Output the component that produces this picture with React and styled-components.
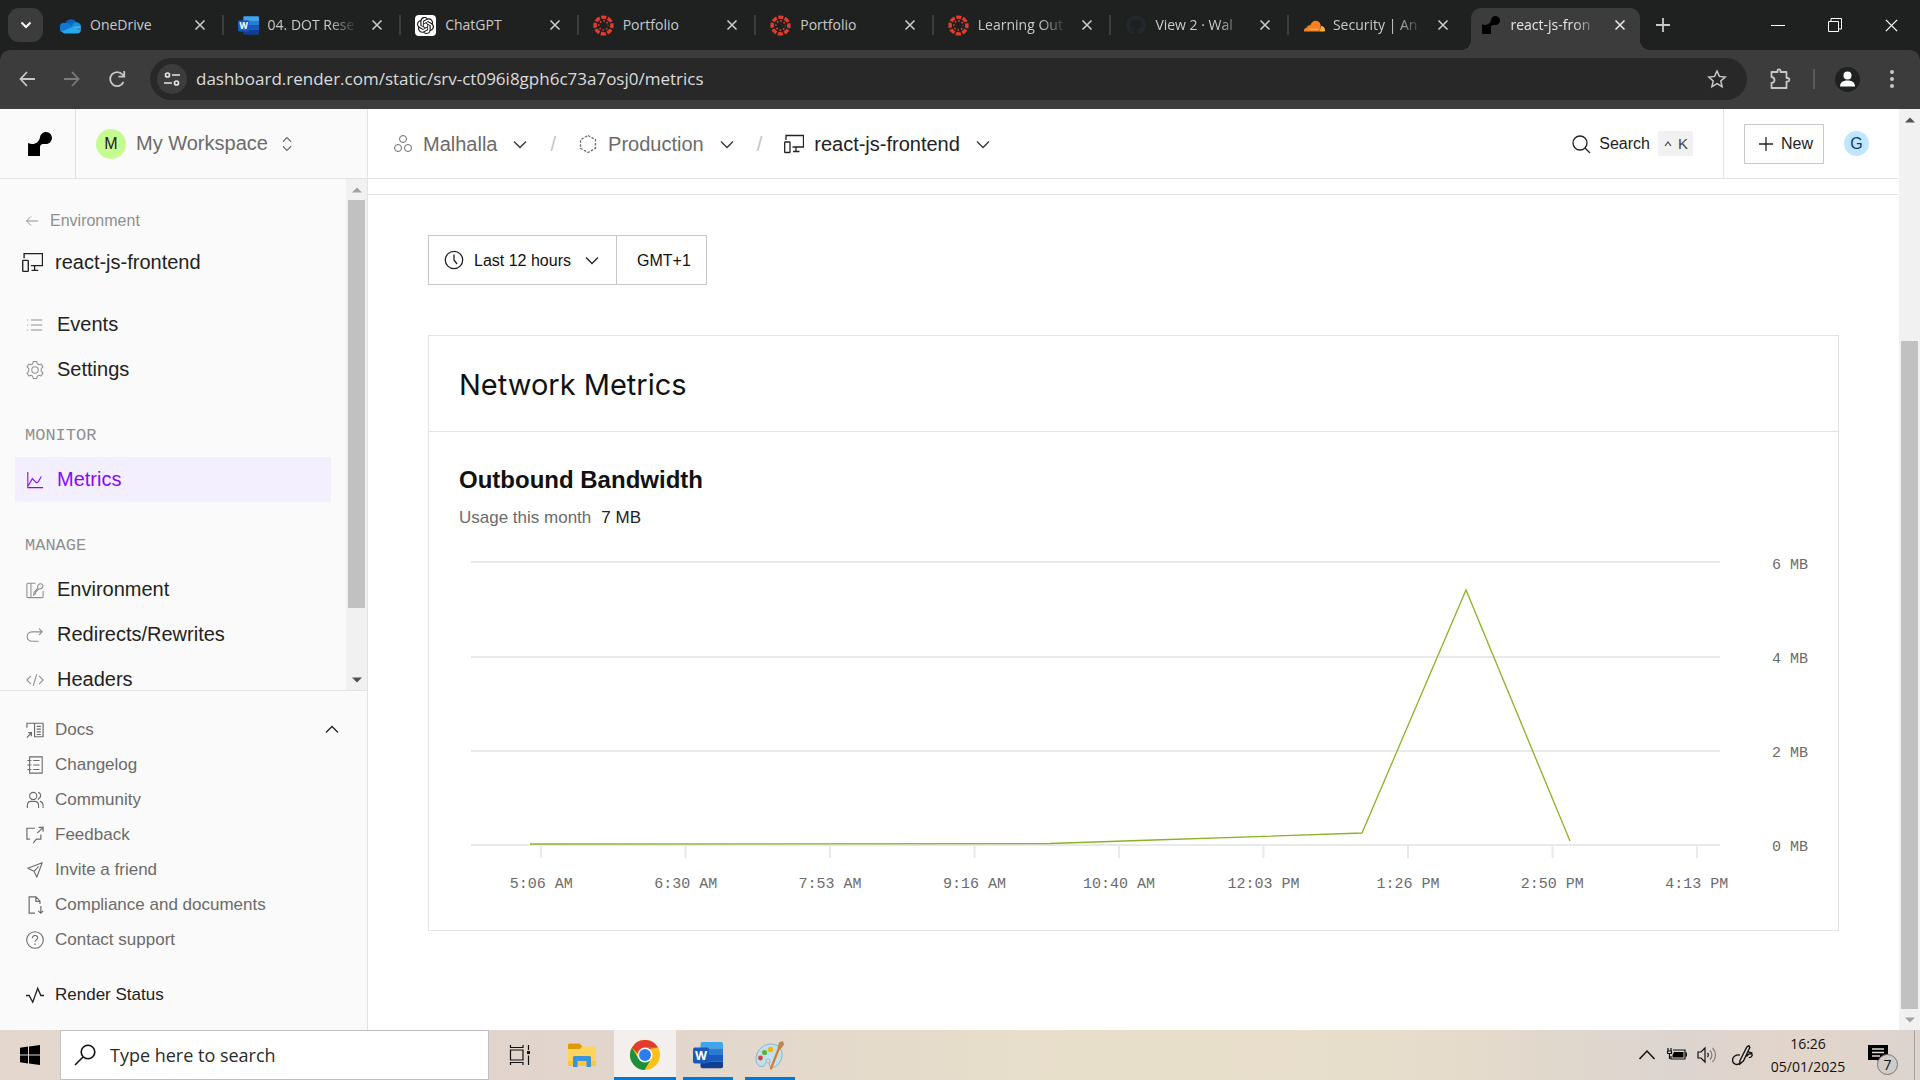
import React from "react";
import styled, { createGlobalStyle, css } from "styled-components";
import { SiOpenai } from "react-icons/si";
import { FaGithub } from "react-icons/fa";

const sans = '"Liberation Sans", Arial, sans-serif';
const mono = '"Liberation Mono", "Courier New", monospace';
const system = '"Open Sans", "Segoe UI", sans-serif';
const display = 'Inter, "Liberation Sans", sans-serif';

const GlobalStyle = createGlobalStyle`
  *, *::before, *::after { box-sizing: border-box; }
  body { margin: 0; font-family: ${sans}; background: #fff; color: #222; }
  h1, h2, p, ul, ol { margin: 0; padding: 0; }
  ul, ol { list-style: none; }
  a { color: inherit; text-decoration: none; }
  button { font: inherit; color: inherit; background: none; border: 0; padding: 0; cursor: pointer; }
  svg { display: block; flex: none; }
`;

/* ---------- icons ---------- */

function Icon({ size = 20, box = 20, weight = 1, children, ...rest }) {
  return (
    <svg
      width={size}
      height={size}
      viewBox={`0 0 ${box} ${box}`}
      fill="none"
      stroke="currentColor"
      strokeWidth={weight}
      aria-hidden="true"
      {...rest}
    >
      {children}
    </svg>
  );
}

const RenderMark = ({ size }) => (
  <Icon size={size} box={24} fill="#000" stroke="none">
    <path fill="#000" d="M18.263.007c-3.121-.147-5.744 2.109-6.192 5.082-.018.138-.045.272-.067.405-.696 3.703-3.936 6.507-7.827 6.507-1.388 0-2.691-.356-3.825-.979a.2024.2024 0 0 0-.302.178V24H12v-8.999c0-1.656 1.338-3 2.987-3h2.988c3.382 0 6.103-2.817 5.97-6.244-.12-3.084-2.61-5.603-5.682-5.75" />
  </Icon>
);

const OneDriveMark = () => (
  <Icon size={21} stroke="none">
    <path fill="#0364b8" d="M5 8.200A5.800 5.800 0 0 1 15.600 7L12 11.500z" />
    <path fill="#0f78d4" d="M4.600 7.500a4.600 4.600 0 0 1 3.600.7l5.300 3.300L2.200 16.500A4.700 4.700 0 0 1 4.600 7.500z" />
    <path fill="#1490df" d="M11.500 9.800a5 5 0 0 1 4.500-2.800 4.500 4.500 0 0 1 4 5l-8 1.500z" />
    <path fill="#28a8ea" d="M1.600 15.500 12.400 11.200l7.400 4A3.400 3.400 0 0 1 16.400 17.500H4.500a4 4 0 0 1-2.900-2z" />
    <path fill="#50d0ff" d="M12.300 11.300 19 10.500a4 4 0 0 1 .6 5z" opacity=".6" />
  </Icon>
);

const WordMark = ({ size }) => (
  <Icon size={size} box={32} stroke="none">
    <path fill="#41a5ee" d="M10 2h20a2 2 0 0 1 2 2v5H8V4a2 2 0 0 1 2-2z" />
    <path fill="#2b7cd3" d="M8 9h24v7H8z" />
    <path fill="#185abd" d="M8 16h24v7H8z" />
    <path fill="#103f91" d="M8 23h24v5a2 2 0 0 1-2 2H10a2 2 0 0 1-2-2z" />
    <rect x="0" y="8" width="17" height="17" rx="2" fill="#185abd" />
    <text x="8.500" y="21.500" textAnchor="middle" fontFamily={display} fontSize="13" fontWeight="700" fill="#fff">W</text>
  </Icon>
);

const CanvasMark = () => (
  <Icon size={21} box={22} stroke="#e63b2c">
    <circle cx="11" cy="11" r="8.800" strokeWidth="3.600" strokeDasharray="5.250 1.661" strokeDashoffset="2.600" />
    <circle cx="11" cy="11" r="4.800" strokeWidth="1.700" strokeDasharray="1.600 2.170" strokeDashoffset="0.800" />
  </Icon>
);

const CloudflareMark = () => (
  <Icon size={22} box={24} stroke="none">
    <path fill="#f6821f" d="M1 18c-.2-3 1.600-4.300 3.600-4.500.1-2 1.900-2.800 3.200-2 1.200-4 4-5.500 6.400-5.300 3 .2 5 2.600 5.200 5.500L18 18z" />
    <path fill="#fbad41" d="M18 18.100l1.800-6c2.500 0 4.200 2 4.200 4.200 0 .7-.1 1.200-.3 1.800z" />
    <path stroke="#fff" strokeWidth=".8" d="M7 15.600h9.500" opacity=".5" />
  </Icon>
);

const ChromeMark = () => (
  <Icon size={30} box={30} stroke="none">
    <circle cx="15" cy="15" r="15" fill="#fbc116" />
    <path fill="#e33b2e" d="M15 15 2 7.500A15 15 0 0 1 28 7.500H15z" />
    <path fill="#1e8e3e" d="M2 7.500 8.500 18.700 15 22.500 13.500 29.930A15 15 0 0 1 2 7.500z" />
    <path fill="#1e8e3e" d="M8 18 15 21.500 20.500 20 14.500 30 8 28z" />
    <path fill="#e33b2e" d="M2 7.500h26L18 9 8 14z" />
    <circle cx="15" cy="15" r="7.500" fill="#fff" />
    <circle cx="15" cy="15" r="6" fill="#2b7de9" />
  </Icon>
);

const FolderMark = () => (
  <Icon size={28} box={28} stroke="none">
    <path fill="#dd9a06" d="M0 4a1.500 1.500 0 0 1 1.500-1.500h10L14 5v4H0z" />
    <path fill="#ffd45c" d="M0 8h12l2-2.500h13a1 1 0 0 1 1 1V25H0z" />
    <path fill="#fbc73f" d="M0 20h28v5H0z" />
    <path fill="#3a94da" d="M5 26V16.500A1.500 1.500 0 0 1 6.500 15h15a1.500 1.500 0 0 1 1.500 1.500V26h-4.500v-6h-9v6z" />
  </Icon>
);

const PaintMark = () => (
  <Icon size={30} box={30} stroke="none">
    <path fill="#bfe0ee" stroke="#79a8bf" strokeWidth=".8" d="M16 4C8 4 1 11 1 19c0 4 2 7.500 6 7.500 3 0 2.500-3 4.500-4 2.500-1 3 1 3 3s2 3 5 1.500c5-2.500 8-8 7.500-13.500C26.500 7.500 22 4 16 4z" />
    <circle cx="13" cy="21" r="2" fill="#e4dccb" stroke="#79a8bf" strokeWidth=".6" />
    <circle cx="5.500" cy="18" r="2.400" fill="#d8433b" />
    <circle cx="9.500" cy="12.500" r="2.600" fill="#5db331" />
    <circle cx="15.500" cy="9.500" r="2.700" fill="#f0b619" />
    <path stroke="#dd7a24" strokeWidth="2.200" strokeLinecap="round" d="M16 28.500 24 8" />
    <path fill="#bb8650" d="m22.500 8 1.500-5.500L28 1l1 3.500-3.500 5z" />
  </Icon>
);

const StaticSite = ({ size }) => (
  <Icon size={size} box={20} weight={1.3}>
    <path d="M2 6V1.500h17.500v11.500H8.500M12 13v4.500M9 17.500h6.500" />
    <rect x=".7" y="8" width="5.300" height="10.500" rx=".6" />
  </Icon>
);

const Chevron = ({ dir = "down", size = 16 }) => (
  <Icon size={size} box={16} weight={1.3}>
    <path d={dir === "down" ? "m2 5.500 6 6 6-6" : "m2 10.500 6-6 6 6"} />
  </Icon>
);

const Close = ({ size = 12, weight = 1.6 }) => (
  <Icon size={size} box={12} weight={weight}><path d="m1.500 1.500 9 9M10.500 1.500l-9 9" /></Icon>
);

const glyphs = {
  events: <path strokeWidth="1.200" d="M1.500 4.500h1M1.500 10h1M1.500 15.500h1M5.500 4.500h12.500M5.500 10h12.500M5.500 15.500h12.500" />,
  settings: (
    <g transform="translate(-1.200 -1.200) scale(1.120)">
      <path d="M8.300 1.500h3.400l.6 2.300 1.500.9 2.300-.7 1.800 2.900-1.700 1.700v2.800l1.700 1.700-1.800 2.900-2.300-.7-1.500.9-.6 2.300H8.300l-.6-2.300-1.500-.9-2.300.7-1.800-2.900 1.700-1.700V8.600L2.100 6.900 3.900 4l2.300.7 1.500-.9z" strokeLinejoin="round" />
      <circle cx="10" cy="10" r="3.200" />
    </g>
  ),
  metrics: <path strokeWidth="1.200" d="M2 1v17.500h17M2.500 16.500l4.500-8 4.500 4.500c1.500.5 2-.5 2.500-1.500l3-5.500" />,
  environment: (
    <path strokeWidth="1.200" d="M10.500 2.500H2a1 1 0 0 0-1 1v14a1 1 0 0 0 1 1h16a1 1 0 0 0 1-1V11M5.500 2.500v16M8.500 15.500l.5-3 4-4.500c-.5-3 1-5 3.500-5s3 3 1.500 4.500-2.500 1.500-3.500 1.200L11 12l-.5 2zM16 5.500h.5" />
  ),
  redirects: <path strokeWidth="1.200" d="M18 6.500H6.500a4.800 4.800 0 0 0 0 10.500H14M14.500 3l3.500 3.500-3.500 3.500" />,
  headers: <path strokeWidth="1.200" d="M5.500 5.500 1 10l4.500 4.500M14.500 5.500 19 10l-4.500 4.500M12 3.500 8 16.500" />,
  docs: (
    <>
      <path strokeWidth="1.300" d="M1 7.500V2.500h18v15H9.500V2.500M12 6h4.500M12 9h4.500M12 12h4.500M12 15h4.500" />
      <path strokeWidth="1.400" d="M1 18.500 6 13M2.500 13H6v4" />
    </>
  ),
  changelog: <path strokeWidth="1.200" d="M4 1h14v18H4zM1.500 5h4.500M1.500 10h4.500M1.500 15h4.500M8 5h7M8 10h7M8 15h7" />,
  community: (
    <>
      <circle cx="8" cy="5.500" r="4" strokeWidth="1.200" />
      <path strokeWidth="1.200" d="M1.500 19v-3c0-3 2-4.500 4-4.500h4c2.500 0 4.500 1.500 4.500 4.500v3M13.500 1.500c3 .5 4.500 5-.3 8M15.500 11.500c2.500.5 3.500 2 3.500 4.500v3" />
    </>
  ),
  feedback: <path strokeWidth="1.300" d="M10 2.500H1v12h3.500M16.500 9.500v5h-5L8 19M12.500 8 19 1.500M14 1.500h5v5" />,
  invite: <path strokeWidth="1.200" strokeLinejoin="round" d="M18 2 2 8l7 3.500L12 18zM9 11.500 14 6" />,
  compliance: <path strokeWidth="1.300" d="M10 19H3.500V1H11l4.500 4.500V9M11 1v5h4.500M16.500 11v8M13.500 16.500l3 2.500 2.500-2.500" />,
  support: (
    <>
      <circle cx="10" cy="10" r="9.200" strokeWidth="1.200" />
      <path strokeWidth="1.200" d="M7 8c0-4 6-4 6-.5 0 2.300-3 2.300-3 4.500M10 14v1.500" />
    </>
  ),
  status: <path strokeWidth="1.500" d="M0 10.500h3.500l4 7.500L13 2.500l3.500 8H20" />,
};

/* ---------- browser frame ---------- */

const Screen = styled.div`
  display: flex;
  flex-direction: column;
  height: 100vh;
  overflow: hidden;
`;

const TabStrip = styled.div`
  display: flex;
  align-items: center;
  height: 50px;
  flex: none;
  background: #1f2120;
  color: #c9cac9;
  font: 14px/20px ${system};
`;

const TabSearch = styled.button`
  display: grid;
  place-items: center;
  width: 35px;
  height: 34px;
  margin: 0 3px 0 8px;
  border-radius: 11px;
  background: #3c3c3c;
  color: #fff;
`;

const Tabs = styled.ul`
  display: flex;
  flex: 1;
  max-width: 1598px;
  height: 50px;
  padding-top: 8px;
`;

const TabItem = styled.li`
  position: relative;
  display: flex;
  align-items: center;
  flex: 1;
  min-width: 0;
  height: 42px;
  padding: 0 16px 8px 14px;
  ${(p) =>
    p.$active
      ? css`
          color: #e6e6e6;
          margin: 0 4px;
          padding: 0 12px 8px 10px;
          border-radius: 10px 10px 0 0;
          background: #3c3c3c;
          &::before,
          &::after {
            content: "";
            position: absolute;
            bottom: 0;
            width: 10px;
            height: 10px;
          }
          &::before {
            left: -10px;
            background: radial-gradient(circle at 0 0, transparent 10px, #3c3c3c 10px);
          }
          &::after {
            right: -10px;
            background: radial-gradient(circle at 100% 0, transparent 10px, #3c3c3c 10px);
          }
        `
      : p.$divider &&
        css`
          &::after {
            content: "";
            position: absolute;
            right: 0;
            top: 7px;
            width: 2px;
            height: 20px;
            background: #3c3c3c;
          }
        `}
`;

const TabTitle = styled.button`
  display: flex;
  align-items: center;
  gap: 9px;
  flex: 1;
  min-width: 0;
`;

const TabIcon = styled.span`
  display: grid;
  place-items: center;
  flex: none;
  width: 21px;
  height: 21px;
  border-radius: 4px;
  background: ${(p) => (p.$light ? "#fff" : "transparent")};
  color: ${(p) => (p.$light ? "#111" : "#24292f")};
`;

const TabText = styled.span`
  flex: 1;
  min-width: 0;
  text-align: left;
  white-space: nowrap;
  mask-image: ${(p) => (p.$fade ? "linear-gradient(90deg, #000 70%, transparent)" : "none")};
`;

const TabClose = styled.button`
  display: grid;
  place-items: center;
  width: 16px;
  height: 20px;
  margin-left: 12px;
`;

const NewTab = styled.button`
  display: grid;
  place-items: center;
  width: 34px;
  height: 34px;
  margin-left: 2px;
`;

const WindowControls = styled.div`
  display: flex;
  margin-left: auto;
  color: #fff;
`;

const WindowControl = styled.button`
  display: grid;
  place-items: center;
  width: 57px;
  height: 50px;
`;

const ToolbarBack = styled.div`
  flex: none;
  background: #1f2120;
`;

const Toolbar = styled.div`
  display: flex;
  align-items: center;
  height: 59px;
  padding: 0 11px 1px 10px;
  border-radius: 10px 10px 0 0;
  background: #3c3c3c;
  color: #c7c7c7;
`;

const ToolButton = styled.button`
  display: grid;
  place-items: center;
  width: 34px;
  height: 34px;
  margin-right: 11px;
  color: ${(p) => (p.$dim ? "#7c7c7c" : "inherit")};
  &:last-child { margin-right: 0; }
`;

const AddressBar = styled.form`
  display: flex;
  align-items: center;
  flex: 1;
  height: 42px;
  margin: 0 16px 0 5px;
  padding: 0 20px 0 7px;
  border-radius: 21px;
  background: #282828;
`;

const SiteInfo = styled.button`
  display: grid;
  place-items: center;
  width: 30px;
  height: 30px;
  margin-right: 9px;
  border-radius: 50%;
  background: #3c3c3c;
  color: #e3e3e3;
`;

const AddressInput = styled.input`
  flex: 1;
  min-width: 0;
  padding: 0;
  border: 0;
  outline: 0;
  background: transparent;
  color: #dcdcdc;
  font: 17px/24px ${system};
`;

const ToolDivider = styled.span`
  width: 2px;
  height: 20px;
  margin: 0 15px 0 5px;
  background: #5a5a5a;
`;

const ProfileDot = styled.span`
  display: grid;
  place-items: center;
  width: 25px;
  height: 25px;
  border-radius: 50%;
  background: #1f2120;
  color: #fff;
`;

/* ---------- dashboard ---------- */

const Viewport = styled.div`
  display: flex;
  flex: 1;
  min-height: 0;
  background: #fff;
`;

const Dashboard = styled.div`
  display: flex;
  flex-direction: column;
  flex: 1;
  min-width: 0;
`;

const TopBar = styled.header`
  display: flex;
  height: 70px;
  flex: none;
  border-bottom: 1px solid #e3e3e3;
`;

const Brand = styled.a`
  display: grid;
  place-items: center;
  width: 76px;
  padding-left: 4px;
  border-right: 1px solid #e3e3e3;
  background: #fafafa;
`;

const Workspace = styled.button`
  display: flex;
  align-items: center;
  gap: 10px;
  width: 292px;
  padding-left: 20px;
  border-right: 1px solid #e3e3e3;
  background: #fafafa;
  color: #6b6b6b;
  font-size: 20px;
`;

const Initial = styled.span`
  display: grid;
  place-items: center;
  width: ${(p) => p.$size}px;
  height: ${(p) => p.$size}px;
  border-radius: 50%;
  background: ${(p) => p.$bg};
  color: ${(p) => p.$fg};
  font-size: 16px;
`;

const Crumbs = styled.nav`
  display: flex;
  align-items: center;
  flex: 1;
  padding: 1px 0 0 25px;
  font-size: 20px;
  color: #6b6b6b;
`;

const Crumb = styled.a`
  display: flex;
  align-items: center;
  gap: 10px;
  color: ${(p) => (p.$current ? "#222" : "inherit")};
`;

const CrumbMenu = styled.button`
  margin-left: 15px;
  color: #333;
`;

const Slash = styled.span`
  margin: 0 22px;
  color: #c4c4c4;
`;

const SearchButton = styled.button`
  display: flex;
  align-items: center;
  gap: 8px;
  padding-right: 30px;
  font-size: 16px;
`;

const Keys = styled.kbd`
  display: flex;
  align-items: center;
  gap: 6px;
  height: 25px;
  padding: 0 5px 0 6px;
  background: #f1f1f1;
  color: #444;
  font: 15px ${sans};
`;

const Account = styled.div`
  display: flex;
  align-items: center;
  gap: 20px;
  padding: 0 30px 0 20px;
  border-left: 1px solid #e3e3e3;
`;

const NewButton = styled.button`
  display: flex;
  align-items: center;
  gap: 7px;
  height: 40px;
  padding: 0 10px 0 13px;
  border: 1px solid #c7c7c7;
  font-size: 16px;
`;

const Columns = styled.div`
  display: flex;
  flex: 1;
  min-height: 0;
`;

const Sidebar = styled.aside`
  display: flex;
  flex-direction: column;
  width: 368px;
  flex: none;
  border-right: 1px solid #e3e3e3;
  background: #fafafa;
`;

const SidebarScroll = styled.div`
  display: flex;
  flex: 1;
  min-height: 0;
`;

const SidebarNav = styled.nav`
  flex: 1;
  overflow: hidden;
  padding: 29px 15px 0 15px;
`;

const BackLink = styled.a`
  display: flex;
  align-items: center;
  gap: 11px;
  height: 26px;
  padding-left: 10px;
  color: #8f8f8f;
  font-size: 16px;
`;

const ServiceName = styled.a`
  display: flex;
  align-items: center;
  gap: 12px;
  height: 30px;
  margin: 13px 0 25px;
  padding-left: 7px;
  font-size: 20px;
`;

const NavLabel = styled.h2`
  display: flex;
  align-items: center;
  height: 65px;
  padding: 22px 10px 0;
  color: #8f8f8f;
  font: 17px/20px ${mono};
`;

const NavLink = styled.a`
  display: flex;
  align-items: center;
  gap: 13px;
  height: 45px;
  padding-left: 11px;
  font-size: 20px;
  background: ${(p) => (p.$active ? "#f4efff" : "transparent")};
  color: ${(p) => (p.$active ? "#8a05ff" : "#222")};
  svg { color: ${(p) => (p.$active ? "#8a05ff" : "#8f8f8f")}; }
`;

const SidebarFooter = styled.div`
  padding: 21px 27px 18px 26px;
  border-top: 1px solid #e3e3e3;
`;

const FooterRow = styled.div`
  display: flex;
  align-items: center;
  justify-content: space-between;
  height: 35px;
  margin-top: ${(p) => (p.$spaced ? "20px" : "0")};
  color: ${(p) => (p.$spaced ? "#222" : "#6b6b6b")};
`;

const FooterLink = styled.a`
  display: flex;
  align-items: center;
  gap: 11px;
  font-size: 17px;
`;

const FooterToggle = styled.button`
  color: #222;
`;

const Track = styled.div`
  display: flex;
  flex-direction: column;
  align-items: center;
  width: 21px;
  flex: none;
  background: #f1f1f1;
`;

const Arrow = styled.span`
  display: grid;
  place-items: center;
  flex: none;
  height: 21px;
  color: ${(p) => (p.$on ? "#505050" : "#a3a3a3")};
`;

const Lane = styled.div`
  display: flex;
  flex-direction: column;
  flex: 1;
  width: 17px;
`;

const Thumb = styled.span`
  flex: ${(p) => p.$share};
  background: #c1c1c1;
`;

const Gap = styled.span`
  flex: ${(p) => p.$share};
`;

const Main = styled.main`
  flex: 1;
  min-width: 0;
  padding-top: 15px;
`;

const Content = styled.div`
  border-top: 1px solid #e3e3e3;
  padding: 40px 60px 0;
`;

const Filters = styled.div`
  display: inline-flex;
  height: 50px;
  margin-bottom: 50px;
  border: 1px solid #c7c7c7;
  font-size: 16px;
`;

const RangeField = styled.label`
  display: flex;
  align-items: center;
  padding: 0 16px 0 15px;
`;

const RangeSelect = styled.select`
  appearance: none;
  margin: 0 13px 0 10px;
  padding: 2px 0 0;
  border: 0;
  background: transparent;
  color: #111;
  font: 16px/24px ${sans};
`;

const ZoneButton = styled.button`
  padding: 2px 15px 0 20px;
  border-left: 1px solid #c7c7c7;
  color: #111;
`;

const Card = styled.section`
  border: 1px solid #e3e3e3;
`;

const CardHead = styled.header`
  display: flex;
  align-items: center;
  height: 96px;
  padding: 2px 30px 0;
  border-bottom: 1px solid #e3e3e3;
`;

const CardTitle = styled.h1`
  font: 400 29px/36px ${display};
  color: #111;
`;

const CardBody = styled.div`
  padding: 33px 28px 35px 30px;
`;

const MetricTitle = styled.h2`
  font: 700 24px/30px ${sans};
  color: #111;
`;

const Usage = styled.p`
  display: flex;
  gap: 10px;
  margin: 11px 0 24px;
  font-size: 17px;
  line-height: 24px;
  color: #6b6b6b;
  strong { font-weight: 400; color: #222; }
`;

const Chart = styled.figure`
  display: grid;
  grid-template-columns: 1fr 41px;
  margin: 0 0 0 10px;
  color: #6b6b6b;
  font: 15px/20px ${mono};
`;

const Plot = styled.svg`
  width: 100%;
  height: 306px;
`;

const YAxis = styled.ol`
  display: flex;
  flex-direction: column;
  justify-content: space-between;
  height: 304px;
  padding: 2px 0 0 3px;
  white-space: nowrap;
`;

const XAxis = styled.ol`
  display: grid;
  grid-template-columns: repeat(9, 1fr);
  margin-top: 15px;
  text-align: center;
`;

/* ---------- desktop bar ---------- */

const Taskbar = styled.footer`
  display: flex;
  align-items: stretch;
  height: 50px;
  flex: none;
  background: linear-gradient(90deg, #e3d7ce 0, #e0d4cc 28%, #e8dfca 58%, #e6dccb 75%, #dcd4cf 87%, #e2d5ca 94%, #dcd4cf 100%);
  color: #111;
  font-family: ${system};
`;

const StartButton = styled.button`
  display: grid;
  place-items: center;
  width: 60px;
`;

const TaskSearch = styled.label`
  display: flex;
  align-items: center;
  gap: 14px;
  width: 429px;
  padding-left: 13px;
  border: 1px solid #c0c0c0;
  background: #fff;
`;

const TaskInput = styled.input`
  flex: 1;
  min-width: 0;
  padding: 0;
  border: 0;
  outline: 0;
  font: 18px/24px ${system};
  &::placeholder { color: #2b2b2b; opacity: 1; }
`;

const TaskButton = styled.button`
  position: relative;
  display: grid;
  place-items: center;
  width: 62px;
  margin: ${(p) => (p.$front ? "0 1px" : "0")};
  background: ${(p) => (p.$front ? "#f3efec" : "transparent")};
  &::after {
    content: "";
    position: absolute;
    bottom: 0;
    left: ${(p) => (p.$front ? 0 : 6)}px;
    right: ${(p) => (p.$front ? 0 : 6)}px;
    height: 3px;
    background: ${(p) => (p.$open ? "#0078d7" : "transparent")};
  }
`;

const Tray = styled.div`
  display: flex;
  align-items: center;
  margin-left: auto;
`;

const TrayButton = styled.button`
  display: grid;
  place-items: center;
  width: ${(p) => p.$w || 30}px;
  height: 50px;
`;

const Clock = styled.time`
  width: 90px;
  margin-right: 5px;
  text-align: center;
  font-size: 14px;
  line-height: 23px;
`;

const Notices = styled.button`
  position: relative;
  display: grid;
  place-items: center;
  width: 40px;
  height: 50px;
`;

const Badge = styled.span`
  position: absolute;
  left: 19px;
  top: 24px;
  width: 21px;
  height: 21px;
  border: 1px solid #777;
  border-radius: 50%;
  background: #cfcbc8;
  font-size: 14px;
  line-height: 19px;
`;

const ShowDesktop = styled.button`
  width: 6px;
  margin-left: 16px;
  border-left: 1px solid #aaa39d;
`;

/* ---------- data ---------- */

const tabs = [
  { title: "OneDrive", icon: <OneDriveMark /> },
  { title: "04. DOT Rese", icon: <WordMark size={21} />, fade: true },
  { title: "ChatGPT", icon: <SiOpenai size={17} />, light: true },
  { title: "Portfolio", icon: <CanvasMark /> },
  { title: "Portfolio", icon: <CanvasMark /> },
  { title: "Learning Out", icon: <CanvasMark />, fade: true },
  { title: "View 2 · Wal", icon: <FaGithub size={20} />, fade: true },
  { title: "Security | An", icon: <CloudflareMark />, fade: true },
  { title: "react-js-fron", icon: <RenderMark size={18} />, fade: true, active: true },
];

const manageLinks = [
  ["environment", "Environment"],
  ["redirects", "Redirects/Rewrites"],
  ["headers", "Headers"],
];

const footerLinks = [
  ["docs", "Docs"],
  ["changelog", "Changelog"],
  ["community", "Community"],
  ["feedback", "Feedback"],
  ["invite", "Invite a friend"],
  ["compliance", "Compliance and documents"],
  ["support", "Contact support"],
];

const times = ["5:06 AM", "6:30 AM", "7:53 AM", "9:16 AM", "10:40 AM", "12:03 PM", "1:26 PM", "2:50 PM", "4:13 PM"];
const levels = ["6 MB", "4 MB", "2 MB", "0 MB"];
const gridRows = [8, 103, 197, 291];
const samples = "61,290 581,289.500 685,286 893,279 997,36 1101,287";

const NavItem = ({ glyph, active, children }) => (
  <NavLink href="#" $active={active}>
    <Icon size={18}>{glyphs[glyph]}</Icon>
    {children}
  </NavLink>
);

const Triangle = ({ up }) => (
  <svg width="10" height="6" viewBox="0 0 10 6" aria-hidden="true">
    <path fill="currentColor" d={up ? "M0 5.500 5 .5l5 5z" : "M0 .5h10l-5 5z"} />
  </svg>
);

function Scrollbar({ before, thumb, after, canUp, canDown }) {
  return (
    <Track>
      <Arrow $on={canUp}><Triangle up /></Arrow>
      <Lane>
        <Gap $share={before} />
        <Thumb $share={thumb} />
        <Gap $share={after} />
      </Lane>
      <Arrow $on={canDown}><Triangle /></Arrow>
    </Track>
  );
}

/* ---------- sections ---------- */

const BrowserFrame = () => (
  <>
    <TabStrip>
      <TabSearch aria-label="Search tabs">
        <Icon size={14} box={14} weight={2}><path d="m2.500 4.500 4.500 4.500 4.500-4.500" /></Icon>
      </TabSearch>
      <Tabs>
        {tabs.map((tab, i) => (
          <TabItem key={i} $active={tab.active} $divider={i < 7}>
            <TabTitle>
              <TabIcon $light={tab.light}>{tab.icon}</TabIcon>
              <TabText $fade={tab.fade}>{tab.title}</TabText>
            </TabTitle>
            <TabClose aria-label="Close tab"><Close /></TabClose>
          </TabItem>
        ))}
      </Tabs>
      <NewTab aria-label="New tab">
        <Icon size={14} box={14} weight={1.8}><path d="M7 0v14M0 7h14" /></Icon>
      </NewTab>
      <WindowControls>
        <WindowControl aria-label="Minimise"><Icon size={14} box={14}><path d="M0 7.500h14" /></Icon></WindowControl>
        <WindowControl aria-label="Restore"><Icon size={14} box={14}><path d="M.5 3.500h10v10H.5zM3 3.500V.5h10.500v10.500h-3" /></Icon></WindowControl>
        <WindowControl aria-label="Close"><Close size={15} weight={1} /></WindowControl>
      </WindowControls>
    </TabStrip>
    <ToolbarBack>
      <Toolbar>
        <ToolButton aria-label="Back"><Icon size={16} box={16} weight={1.8}><path d="M16 8H1.500M8 1 1.500 8 8 15" /></Icon></ToolButton>
        <ToolButton aria-label="Forward" $dim><Icon size={16} box={16} weight={1.8}><path d="M0 8h14.500M8 1l6.500 7L8 15" /></Icon></ToolButton>
        <ToolButton aria-label="Reload"><Icon size={18} box={18} weight={1.8}><path d="M15.500 12A7 7 0 1 1 14.500 4.500L16 6.500M16.200 1v5.700h-5.700" /></Icon></ToolButton>
        <AddressBar onSubmit={(e) => e.preventDefault()}>
          <SiteInfo type="button" aria-label="Site information">
            <Icon size={16} box={16} weight={1.700}>
              <circle cx="3.500" cy="4" r="2" /><path d="M8 4h8M0 12h8" /><circle cx="12.500" cy="12" r="2" />
            </Icon>
          </SiteInfo>
          <AddressInput aria-label="Address" defaultValue="dashboard.render.com/static/srv-ct096i8gph6c73a7osj0/metrics" />
          <button type="button" aria-label="Bookmark">
            <Icon size={20} weight={1.500}><path d="m10 2 2.400 5.400 5.800.6-4.400 3.900 1.300 5.800L10 14.700l-5.100 3 1.300-5.800L1.800 8l5.800-.6z" /></Icon>
          </button>
        </AddressBar>
        <ToolButton aria-label="Extensions">
          <Icon size={22} box={22} weight={1.800}><path strokeLinejoin="round" d="M2.500 4h6V2.800a1.500 1.500 0 0 1 3 0V4h6v6h1a1.800 1.800 0 0 1 0 3.600h-1V20h-15v-5c4-.5 4-5.500 0-6z" /></Icon>
        </ToolButton>
        <ToolDivider />
        <ToolButton aria-label="Profile">
          <ProfileDot><Icon size={17} box={17} stroke="none"><g fill="#fff"><circle cx="8.500" cy="4.500" r="4" /><path d="M1 15.500c0-4 3-6 7.500-6s7.500 2 7.500 6z" /></g></Icon></ProfileDot>
        </ToolButton>
        <ToolButton aria-label="Browser menu">
          <Icon size={20} stroke="none"><g fill="#c7c7c7"><circle cx="10" cy="3" r="2" /><circle cx="10" cy="10" r="2" /><circle cx="10" cy="17" r="2" /></g></Icon>
        </ToolButton>
      </Toolbar>
    </ToolbarBack>
  </>
);

const Header = () => (
  <TopBar>
    <Brand href="#" aria-label="Render"><RenderMark size={24} /></Brand>
    <Workspace>
      <Initial $size={30} $bg="#c6fb8f" $fg="#222">M</Initial>
      My Workspace
      <Icon size={18} box={20} weight={1.300}><path d="m5.500 7.500 4.500-4.500 4.500 4.500M5.500 12.500l4.500 4.500 4.500-4.500" /></Icon>
    </Workspace>
    <Crumbs aria-label="Breadcrumb">
      <Crumb href="#">
        <Icon size={20}><circle cx="10" cy="5" r="3.500" /><circle cx="5" cy="14" r="3.500" /><circle cx="15" cy="14" r="3.500" /></Icon>
        Malhalla
      </Crumb>
      <CrumbMenu aria-label="Switch project"><Chevron /></CrumbMenu>
      <Slash>/</Slash>
      <Crumb href="#">
        <Icon size={20} weight={1.300}><path strokeDasharray="2.500 1.500" d="m10 1.500 7.500 4.200v8.600L10 18.500l-7.500-4.200V5.700z" /></Icon>
        Production
      </Crumb>
      <CrumbMenu aria-label="Switch environment"><Chevron /></CrumbMenu>
      <Slash>/</Slash>
      <Crumb href="#" $current>
        <StaticSite size={20} />
        react-js-frontend
      </Crumb>
      <CrumbMenu aria-label="Switch service"><Chevron /></CrumbMenu>
    </Crumbs>
    <SearchButton>
      <Icon size={20} weight={1.300}><circle cx="9" cy="9" r="7" /><path d="m14 14 5 5" /></Icon>
      Search
      <Keys><Icon size={8} box={8} weight={1.200}><path d="m1 6 3-4 3 4" /></Icon>K</Keys>
    </SearchButton>
    <Account>
      <NewButton>
        <Icon size={16} box={16} weight={1.300}><path d="M8 1v14M1 8h14" /></Icon>
        New
      </NewButton>
      <Initial $size={25} $bg="#bfe6ff" $fg="#12386b">G</Initial>
    </Account>
  </TopBar>
);

const SideNavigation = () => (
  <Sidebar>
    <SidebarScroll>
      <SidebarNav>
        <BackLink href="#">
          <Icon size={14} box={14}><path d="M13 7H1.500M6 2.500 1.500 7 6 11.500" /></Icon>
          Environment
        </BackLink>
        <ServiceName href="#">
          <StaticSite size={21} />
          react-js-frontend
        </ServiceName>
        <NavItem glyph="events">Events</NavItem>
        <NavItem glyph="settings">Settings</NavItem>
        <NavLabel>MONITOR</NavLabel>
        <NavItem glyph="metrics" active>Metrics</NavItem>
        <NavLabel>MANAGE</NavLabel>
        {manageLinks.map(([glyph, label]) => (
          <NavItem key={glyph} glyph={glyph}>{label}</NavItem>
        ))}
      </SidebarNav>
      <Scrollbar before={0} thumb={408} after={61} canDown />
    </SidebarScroll>
    <SidebarFooter>
      {footerLinks.map(([glyph, label]) => (
        <FooterRow key={glyph}>
          <FooterLink href="#"><Icon size={18}>{glyphs[glyph]}</Icon>{label}</FooterLink>
          {glyph === "docs" && <FooterToggle aria-label="Collapse links"><Chevron dir="up" /></FooterToggle>}
        </FooterRow>
      ))}
      <FooterRow $spaced>
        <FooterLink href="#"><Icon size={18}>{glyphs.status}</Icon>Render Status</FooterLink>
      </FooterRow>
    </SidebarFooter>
  </Sidebar>
);

const BandwidthChart = () => (
  <Chart aria-label="Outbound bandwidth">
    <Plot viewBox="0 0 1300 306" preserveAspectRatio="none" aria-hidden="true">
      <g stroke="#e9e9e9" strokeWidth="2">
        {gridRows.map((y) => <path key={y} d={`M2 ${y}H1251`} vectorEffect="non-scaling-stroke" />)}
        {times.map((t, i) => <path key={t} d={`M${(72 + i * 144.5).toFixed(1)} 291v13`} vectorEffect="non-scaling-stroke" />)}
      </g>
      <polyline points={samples} fill="none" stroke="#8ab426" strokeWidth="1.300" vectorEffect="non-scaling-stroke" />
    </Plot>
    <YAxis>{levels.map((l) => <li key={l}>{l}</li>)}</YAxis>
    <XAxis>{times.map((t) => <li key={t}>{t}</li>)}</XAxis>
  </Chart>
);

const DesktopBar = () => (
  <Taskbar>
    <StartButton aria-label="Start">
      <Icon size={20} stroke="none"><path fill="#000" d="M0 2.700 8 1.600v7.900H0zM9 1.400 20 0v9.500H9zM0 10.500h8v7.900l-8-1.100zM9 10.500h11V20L9 18.500z" /></Icon>
    </StartButton>
    <TaskSearch>
      <Icon size={22} box={22} weight={1.600}><circle cx="14" cy="8" r="6.800" /><path d="m9 13-8 8" /></Icon>
      <TaskInput placeholder="Type here to search" aria-label="Type here to search" />
    </TaskSearch>
    <TaskButton aria-label="Task view">
      <Icon size={22} box={22} weight={1.200}><path d="M1.500 6h12.500v10H1.500zM1.500 1v2.500h12.500V1M1.500 21v-2.500h12.500V21M19.500 1v5M19.500 11.500V21" /><path fill="#111" stroke="none" d="M18 7h3v3h-3z" /></Icon>
    </TaskButton>
    <TaskButton aria-label="File Explorer"><FolderMark /></TaskButton>
    <TaskButton aria-label="Google Chrome" $open $front><ChromeMark /></TaskButton>
    <TaskButton aria-label="Word" $open><WordMark size={30} /></TaskButton>
    <TaskButton aria-label="Paint" $open><PaintMark /></TaskButton>
    <Tray>
      <TrayButton aria-label="Hidden icons"><Icon size={18} box={18} weight={1.500}><path d="m1.500 13 7.500-8 7.500 8" /></Icon></TrayButton>
      <TrayButton aria-label="Battery">
        <Icon size={20} weight={1.200}><path d="M6 5h12v9H4v-3M18 8h1.500v3H18M1 3v3M4 3v3M.500 6h4v2.500h-4zM2.500 8.500V14" /><path fill="#000" stroke="none" d="M7 7h9.500v5.500H5.500V10z" /></Icon>
      </TrayButton>
      <TrayButton aria-label="Volume">
        <Icon size={20} weight={1.200}><path d="M1 7h3l4-4v14l-4-4H1zM10.500 8c1 1 1 3 0 4" /><path opacity=".45" d="M13 5.500c2.500 2.500 2.500 6.500 0 9M15.500 3c4 4 4 10 0 14" /></Icon>
      </TrayButton>
      <TrayButton aria-label="Windows Ink" $w={41}>
        <Icon size={21} weight={1.300}><path d="M7.500 15 14 2l2-1.500 1 2L11 15l-3.500 3zM7.500 9.500C4 9 .5 11 .5 14.500S5 20 7.500 17M14 11c1-2 3-3 4.500-2.500S19 12 16 12M15 6.500l4.500 1" /></Icon>
      </TrayButton>
      <Clock>16:26<br />05/01/2025</Clock>
      <Notices aria-label="Notifications">
        <Icon size={20} stroke="none"><path fill="#000" d="M0 0h20v15h-7v4l-4-4H0z" /><path stroke="#e2d8d0" strokeWidth="1.300" d="M4 4h12M4 7.500h12M4 11h8" /></Icon>
        <Badge>7</Badge>
      </Notices>
    </Tray>
    <ShowDesktop aria-label="Show desktop" />
  </Taskbar>
);

export default function App() {
  return (
    <Screen>
      <GlobalStyle />
      <BrowserFrame />
      <Viewport>
        <Dashboard>
          <Header />
          <Columns>
            <SideNavigation />
            <Main>
              <Content>
                <Filters>
                  <RangeField>
                    <Icon size={20} weight={1.300}><circle cx="10" cy="10" r="8.700" /><path d="M10 4.500V10l3 4" /></Icon>
                    <RangeSelect aria-label="Time range"><option>Last 12 hours</option></RangeSelect>
                    <Chevron />
                  </RangeField>
                  <ZoneButton>GMT+1</ZoneButton>
                </Filters>
                <Card>
                  <CardHead><CardTitle>Network Metrics</CardTitle></CardHead>
                  <CardBody>
                    <MetricTitle>Outbound Bandwidth</MetricTitle>
                    <Usage>Usage this month <strong>7 MB</strong></Usage>
                    <BandwidthChart />
                  </CardBody>
                </Card>
              </Content>
            </Main>
          </Columns>
        </Dashboard>
        <Scrollbar before={211} thumb={669} after={0} canUp />
      </Viewport>
      <DesktopBar />
    </Screen>
  );
}
